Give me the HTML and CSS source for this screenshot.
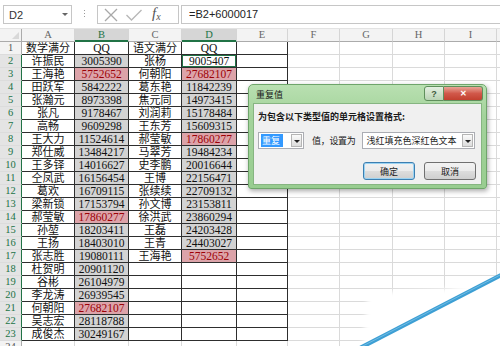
FILE: index.html
```html
<!DOCTYPE html>
<html lang="zh-CN">
<head>
    <meta charset="UTF-8">
    <meta name="viewport" content="width=device-width, initial-scale=1.0">
    <title>重复值</title>
    <link rel="stylesheet" href="styles.css">
</head>
<body>
    <div class="window">
        <!-- 编辑栏 -->
        <div class="formula-bar">
            <div class="name-box"><span>D2</span><span class="caret"></span></div>
            <div class="grip"><i></i><i></i><i></i></div>
            <div class="fx-group">
                <svg width="16" height="14" viewBox="0 0 16 14"><path d="M2 1 L14 13 M14 1 L2 13" stroke="#a8a8a8" stroke-width="1.3" fill="none"/></svg>
                <svg width="18" height="14" viewBox="0 0 18 14"><path d="M1.5 7 L6.5 12 L16.5 2" stroke="#b8b8b8" stroke-width="1.4" fill="none"/></svg>
                <span class="fx">f<sub>x</sub></span>
            </div>
            <div class="formula-input">=B2+6000017</div>
        </div>

        <!-- 工作表 -->
        <table class="sheet">
            <colgroup>
                <col class="c-rh"><col class="c-a"><col class="c-b"><col class="c-c"><col class="c-d">
                <col class="c-e"><col class="c-f"><col class="c-g"><col class="c-h"><col class="c-i"><col class="c-j">
            </colgroup>
            <thead>
                <tr><th class="corner"></th><th>A</th><th class="hl">B</th><th>C</th><th class="hl">D</th><th>E</th><th>F</th><th>G</th><th>H</th><th>I</th><th></th></tr>
            </thead>
            <tbody>
                <tr class="t"><th>1</th><td>数学满分</td><td>QQ</td><td>语文满分</td><td>QQ</td><td></td><td></td><td></td><td></td><td></td><td></td></tr>
                <tr class="t on"><th>2</th><td>许振民</td><td class="sel">3005390</td><td>张杨</td><td class="act">9005407</td><td></td><td></td><td></td><td></td><td></td><td></td></tr>
                <tr class="t on"><th>3</th><td>王海艳</td><td class="sel dup">5752652</td><td>何朝阳</td><td class="sel dup">27682107</td><td></td><td></td><td></td><td></td><td></td><td></td></tr>
                <tr class="t on"><th>4</th><td>田跃军</td><td class="sel">5842222</td><td>葛东艳</td><td class="sel">11842239</td><td></td><td></td><td></td><td></td><td></td><td></td></tr>
                <tr class="t on"><th>5</th><td>张瀚元</td><td class="sel">8973398</td><td>焦元同</td><td class="sel">14973415</td><td></td><td></td><td></td><td></td><td></td><td></td></tr>
                <tr class="t on"><th>6</th><td>张凡</td><td class="sel">9178467</td><td>刘润莉</td><td class="sel">15178484</td><td></td><td></td><td></td><td></td><td></td><td></td></tr>
                <tr class="t on"><th>7</th><td>高畅</td><td class="sel">9609298</td><td>王东芳</td><td class="sel">15609315</td><td></td><td></td><td></td><td></td><td></td><td></td></tr>
                <tr class="t on"><th>8</th><td>王大力</td><td class="sel">11524614</td><td>郝莹敏</td><td class="sel dup">17860277</td><td></td><td></td><td></td><td></td><td></td><td></td></tr>
                <tr class="t on"><th>9</th><td>郑仕威</td><td class="sel">13484217</td><td>马翠芳</td><td class="sel">19484234</td><td></td><td></td><td></td><td></td><td></td><td></td></tr>
                <tr class="t on"><th>10</th><td>王多铎</td><td class="sel">14016627</td><td>史李鹏</td><td class="sel">20016644</td><td></td><td></td><td></td><td></td><td></td><td></td></tr>
                <tr class="t on"><th>11</th><td>仝凤武</td><td class="sel">16156454</td><td>王博</td><td class="sel">22156471</td><td></td><td></td><td></td><td></td><td></td><td></td></tr>
                <tr class="t on"><th>12</th><td>葛欢</td><td class="sel">16709115</td><td>张续续</td><td class="sel">22709132</td><td></td><td></td><td></td><td></td><td></td><td></td></tr>
                <tr class="t on"><th>13</th><td>梁新锁</td><td class="sel">17153794</td><td>孙文博</td><td class="sel">23153811</td><td></td><td></td><td></td><td></td><td></td><td></td></tr>
                <tr class="t on"><th>14</th><td>郝莹敏</td><td class="sel dup">17860277</td><td>徐洪武</td><td class="sel">23860294</td><td></td><td></td><td></td><td></td><td></td><td></td></tr>
                <tr class="t on"><th>15</th><td>孙堃</td><td class="sel">18203411</td><td>王磊</td><td class="sel">24203428</td><td></td><td></td><td></td><td></td><td></td><td></td></tr>
                <tr class="t on"><th>16</th><td>王扬</td><td class="sel">18403010</td><td>王青</td><td class="sel">24403027</td><td></td><td></td><td></td><td></td><td></td><td></td></tr>
                <tr class="t on"><th>17</th><td>张志胜</td><td class="sel">19080111</td><td>王海艳</td><td class="sel dup">5752652</td><td></td><td></td><td></td><td></td><td></td><td></td></tr>
                <tr class="t on"><th>18</th><td>杜贺明</td><td class="sel">20901120</td><td></td><td></td><td></td><td></td><td></td><td></td><td></td><td></td></tr>
                <tr class="t on"><th>19</th><td>谷彬</td><td class="sel">26104979</td><td></td><td></td><td></td><td></td><td></td><td></td><td></td><td></td></tr>
                <tr class="t on"><th>20</th><td>李龙涛</td><td class="sel">26939545</td><td></td><td></td><td></td><td></td><td></td><td></td><td></td><td></td></tr>
                <tr class="t on"><th>21</th><td>何朝阳</td><td class="sel dup">27682107</td><td></td><td></td><td></td><td></td><td></td><td></td><td></td><td></td></tr>
                <tr class="t on"><th>22</th><td>吴志宏</td><td class="sel">28118788</td><td></td><td></td><td></td><td></td><td></td><td></td><td></td><td></td></tr>
                <tr class="t on"><th>23</th><td>成俊杰</td><td class="sel">30249167</td><td></td><td></td><td></td><td></td><td></td><td></td><td></td><td></td></tr>
                <tr><th>24</th><td></td><td></td><td></td><td></td><td></td><td></td><td></td><td></td><td></td><td></td></tr>
            </tbody>
        </table>

        <!-- 重复值 对话框 -->
        <div class="dialog">
            <div class="dlg-title">
                <span>重复值</span>
                <div class="dlg-caption">
                    <span class="cap-help">?</span>
                    <span class="cap-close">✕</span>
                </div>
            </div>
            <div class="dlg-body">
                <div class="dlg-label">为包含以下类型值的单元格设置格式:</div>
                <div class="dlg-row">
                    <div class="combo combo-small"><span class="picked">重复</span><span class="drop"></span></div>
                    <span class="dlg-text">值，设置为</span>
                    <div class="combo combo-wide"><span>浅红填充色深红色文本</span><span class="drop"></span></div>
                </div>
                <div class="dlg-actions">
                    <button class="btn btn-default">确定</button>
                    <button class="btn">取消</button>
                </div>
            </div>
        </div>

        <!-- 截图撕边 -->
        <svg class="tear" width="500" height="346" viewBox="0 0 500 346">
            <defs><filter id="soft" x="-20%" y="-20%" width="140%" height="140%"><feGaussianBlur stdDeviation="2.5"/></filter></defs>
            <polygon points="368,293 446,289 504,276 504,350 362,350" fill="#fff" filter="url(#soft)"/>
            <polygon points="363,346 500,276 500,346" fill="#fff"/>
            <line x1="360" y1="348" x2="503" y2="274" stroke="#3d9fd4" stroke-width="4.2"/>
            <line x1="360" y1="347.5" x2="503" y2="273.5" stroke="#a6d9f2" stroke-width="0.7" opacity="0.7"/>
        </svg>
    </div>
</body>
</html>
```

FILE: styles.css
```css
body {
    margin: 0;
    background-color: #fff;
    font-family: "Liberation Sans", "Noto Sans CJK SC", sans-serif;
    overflow: hidden;
}
.window {
    position: relative;
    width: 500px;
    height: 346px;
    overflow: hidden;
}

/* 编辑栏 */
.formula-bar {
    display: flex;
    align-items: flex-start;
    height: 29px;
    padding-top: 5px;
    box-sizing: border-box;
    border-bottom: 1px solid #e3e3e3;
}
.name-box {
    display: flex;
    align-items: center;
    justify-content: space-between;
    margin-left: 3px;
    width: 69px;
    height: 19px;
    padding: 0 3px 0 5px;
    box-sizing: border-box;
    border: 1px solid #c6c6c6;
    font-size: 11px;
    color: #333;
}
.caret {
    width: 0;
    height: 0;
    border-left: 3px solid transparent;
    border-right: 3px solid transparent;
    border-top: 3px solid #666;
}
.grip {
    display: flex;
    flex-direction: column;
    align-items: center;
    gap: 2px;
    width: 25px;
    padding-top: 5px;
}
.grip i {
    width: 1px;
    height: 1px;
    background-color: #9a9a9a;
}
.fx-group {
    display: flex;
    align-items: center;
    gap: 6px;
    width: 82px;
    height: 19px;
    padding-left: 5px;
    box-sizing: border-box;
    border: 1px solid #c6c6c6;
}
.fx {
    margin-left: 3px;
    font-family: "Liberation Serif", serif;
    font-style: italic;
    font-size: 15px;
    color: #555;
    line-height: 15px;
}
.fx sub {
    font-size: 10px;
    vertical-align: -2px;
}
.formula-input {
    flex: 1;
    height: 19px;
    margin-left: 2px;
    padding-left: 7px;
    box-sizing: border-box;
    border: 1px solid #c6c6c6;
    border-right: none;
    font-size: 11px;
    line-height: 17px;
    color: #222;
}

/* 工作表 */
.sheet {
    border-collapse: separate;
    border-spacing: 0;
    table-layout: fixed;
    width: 520px;
}
.c-rh { width: 22px; }
.c-a { width: 53px; }
.c-b { width: 54px; }
.c-c { width: 53px; }
.c-d { width: 55px; }
.c-e { width: 51px; }
.c-f { width: 52px; }
.c-g { width: 53px; }
.c-h { width: 52px; }
.c-i { width: 52px; }
.c-j { width: 23px; }
.sheet tr {
    height: 13px;
}
.sheet th,
.sheet td {
    padding: 0;
    line-height: 12px;
    text-align: center;
    white-space: nowrap;
    overflow: hidden;
    border-right: 1px solid #dadada;
    border-bottom: 1px solid #dadada;
}
.sheet td {
    font-family: "Liberation Serif", "Noto Sans CJK SC", serif;
    font-size: 11.5px;
    color: #111;
}
.sheet td:nth-of-type(1),
.sheet td:nth-of-type(3) {
    font-size: 11px;
}
.sheet thead th {
    background-color: #f3f3f3;
    font-family: "Liberation Serif", serif;
    font-weight: normal;
    font-size: 10.5px;
    color: #666;
    border-right-color: #d5d5d5;
    border-bottom-color: #ababab;
}
.sheet thead th.hl {
    background-color: #d6d6d6;
    color: #217346;
    box-shadow: inset 0 -1px 0 #217346;
    border-bottom-color: #217346;
}
.sheet thead th.corner {
    position: relative;
    border-right-color: #ababab;
}
.sheet thead th.corner::after {
    content: "";
    position: absolute;
    right: 2px;
    bottom: 2px;
    border-left: 7px solid transparent;
    border-bottom: 7px solid #d8d8d8;
}
.sheet tbody th {
    background-color: #f3f3f3;
    font-family: "Liberation Serif", serif;
    font-weight: normal;
    font-size: 10.5px;
    color: #555;
    border-right-color: #ababab;
    border-bottom-color: #dcdcdc;
}
.sheet tr.on th {
    background-color: #e4e4e4;
    color: #217346;
    border-right-color: #217346;
}
.sheet tr.t td:nth-of-type(-n+5) {
    border-right-color: #2e2e2e;
    border-bottom-color: #2e2e2e;
}
.sheet td.sel {
    background-color: #d3d3d3;
}
.sheet td.dup {
    background-color: #dca3a9;
    color: #9c0006;
}
.sheet td.act {
    box-shadow: inset 0 0 0 1px #217346;
}

/* 对话框 */
.dialog {
    position: absolute;
    left: 248px;
    top: 84px;
    width: 239px;
    height: 105px;
    padding: 0 4px 4px;
    box-sizing: border-box;
    border: 1px solid #6fa56b;
    border-radius: 5px 5px 3px 3px;
    background: linear-gradient(#b9e0b1, #a3d39b 30%, #98cd90);
    box-shadow: 1px 2px 5px rgba(0,0,0,0.35);
    font-family: "Noto Sans CJK SC", sans-serif;
    font-size: 9px;
    color: #1a1a1a;
}
.dlg-title {
    display: flex;
    align-items: flex-start;
    height: 18px;
}
.dlg-title > span {
    padding: 5px 0 0 3px;
    line-height: 10px;
}
.dlg-caption {
    display: flex;
    margin-left: auto;
    margin-right: -1px;
    margin-top: 1px;
}
.cap-help,
.cap-close {
    display: flex;
    align-items: center;
    justify-content: center;
    height: 13px;
    border: 1px solid #5f8f5c;
    font-family: "Liberation Sans", sans-serif;
    font-weight: bold;
    font-size: 9px;
}
.cap-help {
    width: 18px;
    border-radius: 3px 0 0 3px;
    background: linear-gradient(#e4efe1, #b9d3b4);
    color: #3f5a3d;
}
.cap-close {
    width: 38px;
    border-left: none;
    border-radius: 0 3px 3px 0;
    background: linear-gradient(#e9a597, #d1584a 50%, #c2402f);
    color: #fff;
    font-size: 8px;
}
.dlg-body {
    height: 82px;
    padding: 7px 5px 0 4px;
    box-sizing: border-box;
    border: 1px solid #86b581;
    background-color: #f0f0f0;
}
.dlg-label {
    font-weight: bold;
    line-height: 12px;
    white-space: nowrap;
}
.dlg-row {
    display: flex;
    align-items: center;
    margin-top: 9px;
    white-space: nowrap;
}
.combo {
    display: flex;
    flex-shrink: 0;
    align-items: center;
    justify-content: space-between;
    height: 17px;
    padding: 0 1px 0 2px;
    box-sizing: border-box;
    border: 1px solid #abadb3;
    background-color: #fff;
}
.combo-small {
    width: 46px;
}
.combo-wide {
    width: 113px;
    margin-left: 6px;
    padding-left: 4px;
}
.picked {
    padding: 0 3px 0 1px;
    background-color: #3399ff;
    color: #fff;
    line-height: 13px;
}
.drop {
    position: relative;
    width: 11px;
    height: 13px;
    border: 1px solid #b5b5b5;
    box-sizing: border-box;
    background: linear-gradient(#fbfbfb, #dcdcdc);
}
.drop::after {
    content: "";
    position: absolute;
    left: 2px;
    top: 5px;
    border-left: 3px solid transparent;
    border-right: 3px solid transparent;
    border-top: 3px solid #222;
}
.dlg-text {
    flex-shrink: 0;
    margin-left: 8px;
    letter-spacing: -0.3px;
}
.dlg-actions {
    display: flex;
    justify-content: flex-end;
    gap: 9px;
    margin-top: 13px;
}
.btn {
    width: 52px;
    height: 18px;
    padding: 0;
    border: 1px solid #707070;
    border-radius: 3px;
    background: linear-gradient(#f2f2f2, #ebebeb 50%, #dddddd 51%, #cfcfcf);
    font-family: "Noto Sans CJK SC", sans-serif;
    font-size: 9px;
    color: #1a1a1a;
}
.btn-default {
    border-color: #3c7fb1;
    box-shadow: inset 0 0 0 1px #9bd3f2;
}

/* 撕边 */
.tear {
    position: absolute;
    left: 0;
    top: 0;
    pointer-events: none;
}
```
